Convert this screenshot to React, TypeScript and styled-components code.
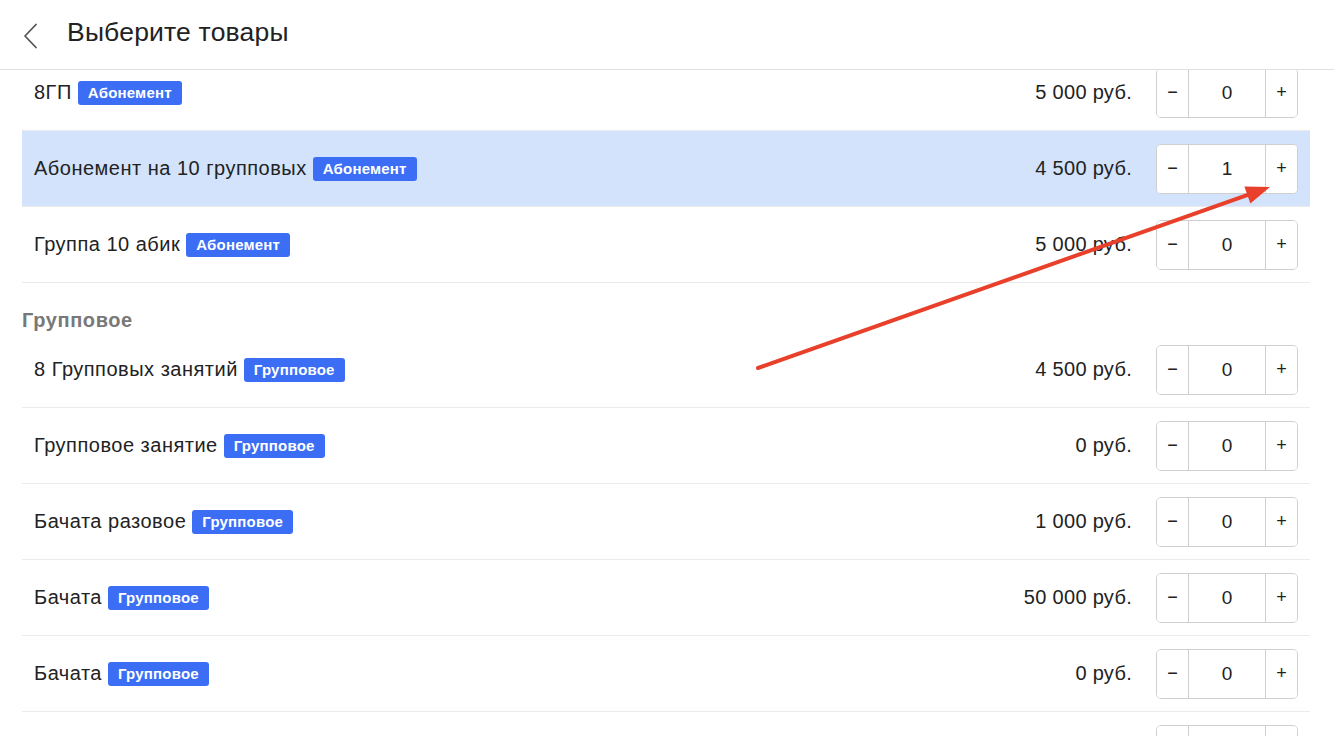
import React, { useLayoutEffect, useRef } from "react";
import styled, { createGlobalStyle } from "styled-components";

const Global = createGlobalStyle`
  html, body { margin: 0; padding: 0; background: #fff; height: 100%; overflow: hidden; }
  body { font-family: "Liberation Sans", Arial, sans-serif; color: #222; }
  * { box-sizing: border-box; }
`;

const Page = styled.div`
  position: relative;
  width: 1334px;
  height: 736px;
  display: flex;
  flex-direction: column;
  overflow: hidden;
`;

const Header = styled.header`
  height: 70px;
  flex: none;
  display: flex;
  align-items: center;
  border-bottom: 1px solid #e0e0e0;
  padding-left: 20px;
  padding-bottom: 6px;
`;

const BackButton = styled.button`
  width: 20px;
  height: 28px;
  padding: 0;
  border: none;
  background: none;
  display: flex;
  align-items: center;
  justify-content: center;
  margin-right: 27px;
  margin-top: 8px;
`;

const Title = styled.h1`
  margin: 0;
  font-size: 26.5px;
  line-height: 32px;
  font-weight: 400;
  color: #222;
  letter-spacing: 0.2px;
`;

const Scroll = styled.div`
  flex: 1;
  overflow-y: scroll;
  scrollbar-width: none;
  &::-webkit-scrollbar { display: none; }
`;

const List = styled.div`
  margin: 0 24px 0 22px;
`;

const SectionTitle = styled.div`
  height: 49px;
  padding-top: 25px;
  font-size: 20px;
  line-height: 24px;
  font-weight: 700;
  color: #787878;
  letter-spacing: 0.6px;
`;

const Row = styled.div<{ $active?: boolean }>`
  height: 76px;
  display: flex;
  align-items: center;
  padding: 0 12px;
  border-bottom: 1px solid #ebebeb;
  background: ${(p) => (p.$active ? "#d2e3fb" : "transparent")};
`;

const Name = styled.div`
  flex: 1;
  display: flex;
  align-items: center;
  font-size: 20px;
  color: #222;
  letter-spacing: 0.5px;
`;

const Badge = styled.span`
  display: inline-flex;
  align-items: center;
  height: 24px;
  margin-left: 6px;
  padding: 0 10px;
  border-radius: 3px;
  background: #3b6ef5;
  color: #fff;
  font-size: 15px;
  font-weight: 700;
  letter-spacing: 0.2px;
`;

const Price = styled.div`
  font-size: 20px;
  color: #222;
  margin-right: 24px;
  text-align: right;
  letter-spacing: 0.3px;
`;

const Stepper = styled.div`
  display: flex;
  height: 50px;
  border: 1px solid #cfcfcf;
  border-radius: 5px;
  background: #fff;
  overflow: hidden;
`;

const StepBtn = styled.button<{ $w: number }>`
  width: ${(p) => p.$w}px;
  border: none;
  background: #fff;
  padding: 0;
  font-family: "Liberation Sans", Arial, sans-serif;
  font-size: 18px;
  color: #222;
  display: flex;
  align-items: center;
  justify-content: center;
`;

const Qty = styled.div`
  width: 78px;
  border-left: 1px solid #cfcfcf;
  border-right: 1px solid #cfcfcf;
  display: flex;
  align-items: center;
  justify-content: center;
  font-size: 19px;
  color: #222;
`;

const Overlay = styled.svg`
  position: absolute;
  left: 0;
  top: 0;
  pointer-events: none;
`;

type Item = { name: string; badge: string; price: string; qty: number; active?: boolean };

const sections: { title: string; items: Item[] }[] = [
  {
    title: "Абонемент",
    items: [
      { name: "8ГП", badge: "Абонемент", price: "5 000 руб.", qty: 0 },
      { name: "Абонемент на 10 групповых", badge: "Абонемент", price: "4 500 руб.", qty: 1, active: true },
      { name: "Группа 10 абик", badge: "Абонемент", price: "5 000 руб.", qty: 0 },
    ],
  },
  {
    title: "Групповое",
    items: [
      { name: "8 Групповых занятий", badge: "Групповое", price: "4 500 руб.", qty: 0 },
      { name: "Групповое занятие", badge: "Групповое", price: "0 руб.", qty: 0 },
      { name: "Бачата разовое", badge: "Групповое", price: "1 000 руб.", qty: 0 },
      { name: "Бачата", badge: "Групповое", price: "50 000 руб.", qty: 0 },
      { name: "Бачата", badge: "Групповое", price: "0 руб.", qty: 0 },
      { name: "Сальса", badge: "Групповое", price: "1 000 руб.", qty: 0 },
      { name: "Кизомба", badge: "Групповое", price: "1 000 руб.", qty: 0 },
    ],
  },
];

export default function App() {
  const ref = useRef<HTMLDivElement>(null);
  useLayoutEffect(() => {
    if (ref.current) ref.current.scrollTop = 64;
  }, []);

  // arrow geometry
  const sx = 758, sy = 368, tx = 1270, ty = 187;
  const dx = tx - sx, dy = ty - sy;
  const len = Math.hypot(dx, dy);
  const ux = dx / len, uy = dy / len;
  const hl = 24, hw = 9;
  const bx = tx - ux * hl, by = ty - uy * hl;
  const px = -uy, py = ux;
  const head = `${tx},${ty} ${bx + px * hw},${by + py * hw} ${bx - px * hw},${by - py * hw}`;

  return (
    <>
      <Global />
      <Page>
        <Header>
          <BackButton aria-label="Назад">
            <svg width="16" height="26" viewBox="0 0 16 26">
              <path d="M14 1.5 L3 13 L14 24.5" fill="none" stroke="#555" strokeWidth="1.8" strokeLinecap="round" strokeLinejoin="round" />
            </svg>
          </BackButton>
          <Title>Выберите товары</Title>
        </Header>
        <Scroll ref={ref}>
          <List>
            {sections.map((s) => (
              <React.Fragment key={s.title}>
                <SectionTitle>{s.title}</SectionTitle>
                {s.items.map((it, i) => (
                  <Row key={i} $active={it.active}>
                    <Name>
                      {it.name}
                      <Badge>{it.badge}</Badge>
                    </Name>
                    <Price>{it.price}</Price>
                    <Stepper>
                      <StepBtn $w={31}>−</StepBtn>
                      <Qty>{it.qty}</Qty>
                      <StepBtn $w={31}>+</StepBtn>
                    </Stepper>
                  </Row>
                ))}
              </React.Fragment>
            ))}
          </List>
        </Scroll>
        <Overlay width="1334" height="736" viewBox="0 0 1334 736">
          <line x1={sx} y1={sy} x2={bx + ux * 2} y2={by + uy * 2} stroke="#e8402a" strokeWidth="4" strokeLinecap="round" />
          <polygon points={head} fill="#e8402a" />
        </Overlay>
      </Page>
    </>
  );
}
